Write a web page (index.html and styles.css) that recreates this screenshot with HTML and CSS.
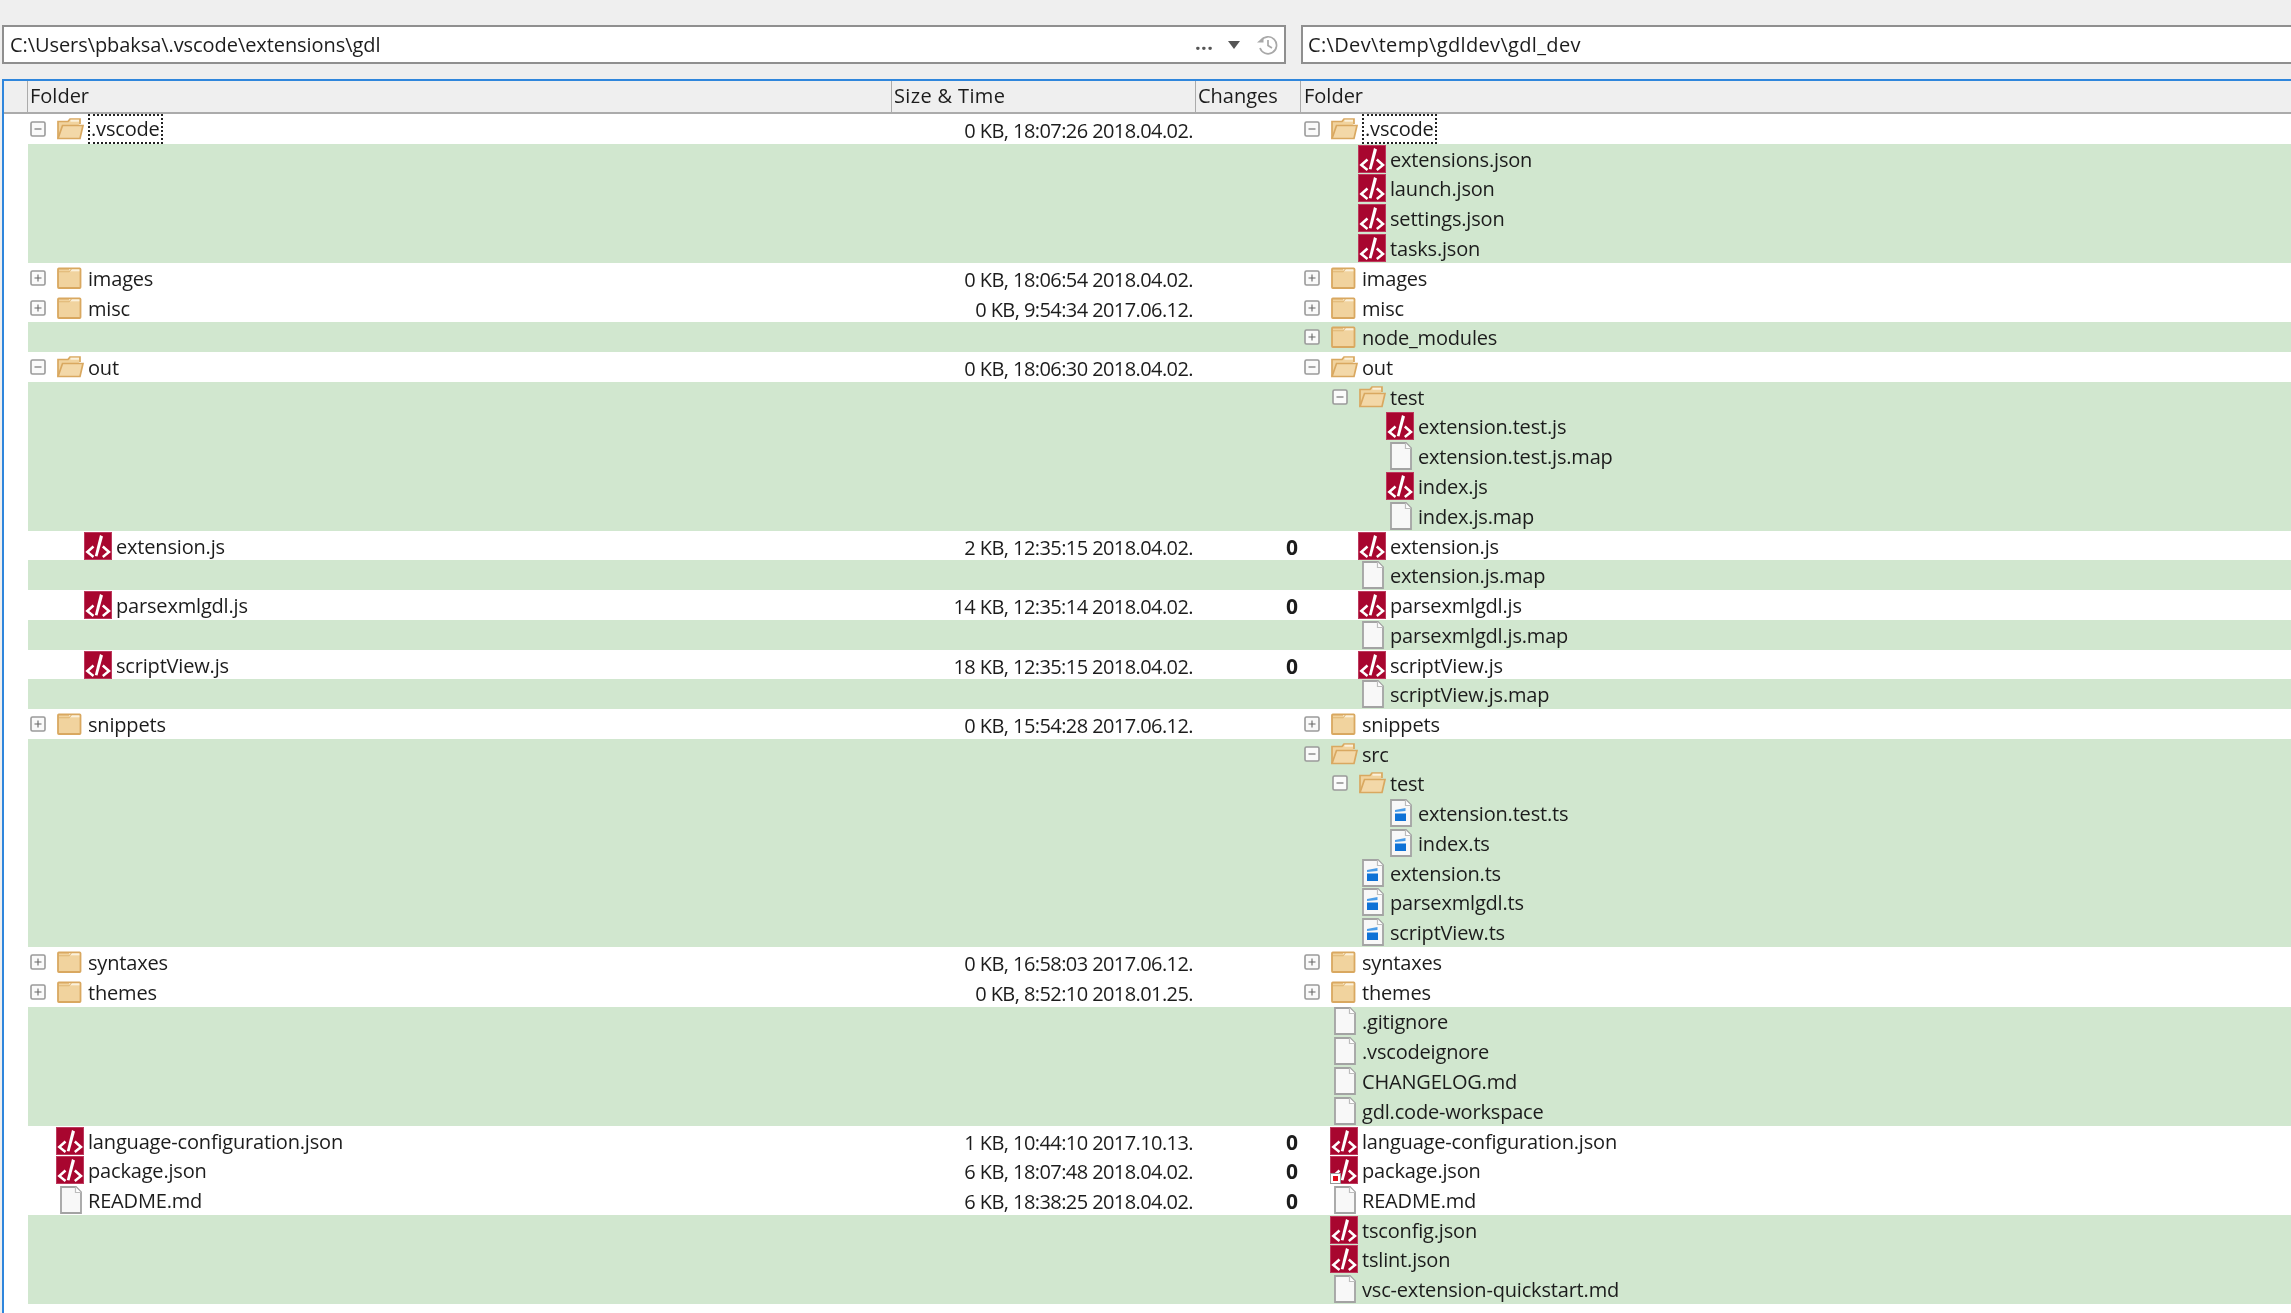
FILE: index.html
```html
<!DOCTYPE html>
<html lang="en">
<head>
<meta charset="utf-8">
<title>Folder compare</title>
<link rel="stylesheet" href="styles.css">
</head>
<body>
<svg class="defs" xmlns="http://www.w3.org/2000/svg">
  <symbol id="red" viewBox="0 0 28 28">
    <rect width="28" height="28" fill="#a8062f"/>
    <rect x=".5" y=".5" width="27" height="27" fill="none" stroke="#bd3a5e"/>
    <path d="M9.500 14.500 3.300 20l6.200 5M18.800 14.500 25 20l-6.200 5" fill="none" stroke="#fff" stroke-width="2.500"/>
    <path d="M16 3 19 4.500 13.500 24.500 10.800 24Z" fill="#fff"/>
  </symbol>
  <symbol id="blank" viewBox="0 0 28 28">
    <path d="M5 1H20L25 6V27H5Z" fill="#f8f8f8" stroke="#a3a3a3" stroke-width="1.800"/>
    <path d="M19.500 1V6.500H25" fill="#fff" stroke="#bdbdbd" stroke-width="1.200"/>
  </symbol>
  <symbol id="ts" viewBox="0 0 28 28">
    <path d="M5 1H20L25 6V27H5Z" fill="#f8f8f8" stroke="#a3a3a3" stroke-width="1.800"/>
    <path d="M19.500 1V6.500H25" fill="#fff" stroke="#bdbdbd" stroke-width="1.200"/>
    <path d="M9 11 19.500 9V12L9 13Z" fill="#4b9de8"/>
    <rect x="9" y="14.500" width="11" height="7.500" fill="#0e72d6"/>
  </symbol>
  <symbol id="closed" viewBox="0 0 25 22">
    <rect x="1" y="1.500" width="22.500" height="19.500" rx=".8" fill="#f1d39e" stroke="#d9a860" stroke-width="1.800"/>
    <path d="M12 3.300H22.400" stroke="#fbf1dc" stroke-width="2"/>
    <path d="M2 4.800H12L14.500 2" fill="none" stroke="#e0b674" stroke-width="1.100"/>
  </symbol>
  <symbol id="open" viewBox="0 0 27 22">
    <path d="M1 20.500V3.500H11L13 1H23V6" fill="#f1d39e" stroke="#d9a860" stroke-width="1.700"/>
    <path d="M13.500 2.700H22" stroke="#fbf1dc" stroke-width="2"/>
    <path d="M1 20.500 5.500 7.500H26L23 20.500Z" fill="#f3d8a8" stroke="#d9a860" stroke-width="1.700"/>
  </symbol>
  <symbol id="plus" viewBox="0 0 16 16">
    <rect x="1" y="1" width="14" height="14" rx="1.500" fill="#fafafa" stroke="#9a9a9a" stroke-width="1.600"/>
    <path d="M4.500 8h7M8 4.500v7" stroke="#666" stroke-width="1.100"/>
  </symbol>
  <symbol id="minus" viewBox="0 0 16 16">
    <rect x="1" y="1" width="14" height="14" rx="1.500" fill="#fafafa" stroke="#9a9a9a" stroke-width="1.600"/>
    <path d="M4.500 8h7" stroke="#666" stroke-width="1.100"/>
  </symbol>
  <symbol id="clock" viewBox="0 0 22 22">
    <path d="M5 6.500A8.500 8.500 0 1 1 4 14" fill="none" stroke="#a8a8a8" stroke-width="1.700"/>
    <path d="M1 8.500H7.500V3Z" fill="#a8a8a8"/>
    <path d="M12 6V11.500L16 14" fill="none" stroke="#a8a8a8" stroke-width="1.700"/>
  </symbol>
</svg>

<main class="app">
  <div class="paths">
    <div class="path path-left">
      <span class="path-text">C:\Users\pbaksa\.vscode\extensions\gdl</span>
      <span class="dots">...</span>
      <span class="caret"></span>
      <svg class="clock"><use href="#clock"/></svg>
    </div>
    <div class="path path-right">
      <span class="path-text">C:\Dev\temp\gdldev\gdl_dev</span>
    </div>
  </div>

  <section class="panel">
    <div class="head">
      <div class="head-gutter"></div>
      <div class="head-cell">Folder</div>
      <div class="head-cell">Size &amp; Time</div>
      <div class="head-cell">Changes</div>
      <div class="head-cell">Folder</div>
    </div>

    <div class="rows">
      <div class="row">
        <div class="tree"><span class="exp"><svg class="box"><use href="#minus"/></svg></span><svg class="folder-open"><use href="#open"/></svg><span class="name focus">.vscode</span></div>
        <div class="meta">0 KB, 18:07:26 2018.04.02.</div><div class="chg"></div>
        <div class="tree"><span class="exp"><svg class="box"><use href="#minus"/></svg></span><svg class="folder-open"><use href="#open"/></svg><span class="name focus">.vscode</span></div>
      </div>
      <div class="row diff"><div></div><div></div><div></div><div class="tree d1"><span class="exp"></span><svg class="ico"><use href="#red"/></svg><span class="name">extensions.json</span></div></div>
      <div class="row diff"><div></div><div></div><div></div><div class="tree d1"><span class="exp"></span><svg class="ico"><use href="#red"/></svg><span class="name">launch.json</span></div></div>
      <div class="row diff"><div></div><div></div><div></div><div class="tree d1"><span class="exp"></span><svg class="ico"><use href="#red"/></svg><span class="name">settings.json</span></div></div>
      <div class="row diff"><div></div><div></div><div></div><div class="tree d1"><span class="exp"></span><svg class="ico"><use href="#red"/></svg><span class="name">tasks.json</span></div></div>
      <div class="row">
        <div class="tree"><span class="exp"><svg class="box"><use href="#plus"/></svg></span><svg class="folder"><use href="#closed"/></svg><span class="name">images</span></div>
        <div class="meta">0 KB, 18:06:54 2018.04.02.</div><div class="chg"></div>
        <div class="tree"><span class="exp"><svg class="box"><use href="#plus"/></svg></span><svg class="folder"><use href="#closed"/></svg><span class="name">images</span></div>
      </div>
      <div class="row">
        <div class="tree"><span class="exp"><svg class="box"><use href="#plus"/></svg></span><svg class="folder"><use href="#closed"/></svg><span class="name">misc</span></div>
        <div class="meta">0 KB, 9:54:34 2017.06.12.</div><div class="chg"></div>
        <div class="tree"><span class="exp"><svg class="box"><use href="#plus"/></svg></span><svg class="folder"><use href="#closed"/></svg><span class="name">misc</span></div>
      </div>
      <div class="row diff"><div></div><div></div><div></div><div class="tree"><span class="exp"><svg class="box"><use href="#plus"/></svg></span><svg class="folder"><use href="#closed"/></svg><span class="name">node_modules</span></div></div>
      <div class="row">
        <div class="tree"><span class="exp"><svg class="box"><use href="#minus"/></svg></span><svg class="folder-open"><use href="#open"/></svg><span class="name">out</span></div>
        <div class="meta">0 KB, 18:06:30 2018.04.02.</div><div class="chg"></div>
        <div class="tree"><span class="exp"><svg class="box"><use href="#minus"/></svg></span><svg class="folder-open"><use href="#open"/></svg><span class="name">out</span></div>
      </div>
      <div class="row diff"><div></div><div></div><div></div><div class="tree d1"><span class="exp"><svg class="box"><use href="#minus"/></svg></span><svg class="folder-open"><use href="#open"/></svg><span class="name">test</span></div></div>
      <div class="row diff"><div></div><div></div><div></div><div class="tree d2"><span class="exp"></span><svg class="ico"><use href="#red"/></svg><span class="name">extension.test.js</span></div></div>
      <div class="row diff"><div></div><div></div><div></div><div class="tree d2"><span class="exp"></span><svg class="ico"><use href="#blank"/></svg><span class="name">extension.test.js.map</span></div></div>
      <div class="row diff"><div></div><div></div><div></div><div class="tree d2"><span class="exp"></span><svg class="ico"><use href="#red"/></svg><span class="name">index.js</span></div></div>
      <div class="row diff"><div></div><div></div><div></div><div class="tree d2"><span class="exp"></span><svg class="ico"><use href="#blank"/></svg><span class="name">index.js.map</span></div></div>
      <div class="row">
        <div class="tree d1"><span class="exp"></span><svg class="ico"><use href="#red"/></svg><span class="name">extension.js</span></div>
        <div class="meta">2 KB, 12:35:15 2018.04.02.</div><div class="chg">0</div>
        <div class="tree d1"><span class="exp"></span><svg class="ico"><use href="#red"/></svg><span class="name">extension.js</span></div>
      </div>
      <div class="row diff"><div></div><div></div><div></div><div class="tree d1"><span class="exp"></span><svg class="ico"><use href="#blank"/></svg><span class="name">extension.js.map</span></div></div>
      <div class="row">
        <div class="tree d1"><span class="exp"></span><svg class="ico"><use href="#red"/></svg><span class="name">parsexmlgdl.js</span></div>
        <div class="meta">14 KB, 12:35:14 2018.04.02.</div><div class="chg">0</div>
        <div class="tree d1"><span class="exp"></span><svg class="ico"><use href="#red"/></svg><span class="name">parsexmlgdl.js</span></div>
      </div>
      <div class="row diff"><div></div><div></div><div></div><div class="tree d1"><span class="exp"></span><svg class="ico"><use href="#blank"/></svg><span class="name">parsexmlgdl.js.map</span></div></div>
      <div class="row">
        <div class="tree d1"><span class="exp"></span><svg class="ico"><use href="#red"/></svg><span class="name">scriptView.js</span></div>
        <div class="meta">18 KB, 12:35:15 2018.04.02.</div><div class="chg">0</div>
        <div class="tree d1"><span class="exp"></span><svg class="ico"><use href="#red"/></svg><span class="name">scriptView.js</span></div>
      </div>
      <div class="row diff"><div></div><div></div><div></div><div class="tree d1"><span class="exp"></span><svg class="ico"><use href="#blank"/></svg><span class="name">scriptView.js.map</span></div></div>
      <div class="row">
        <div class="tree"><span class="exp"><svg class="box"><use href="#plus"/></svg></span><svg class="folder"><use href="#closed"/></svg><span class="name">snippets</span></div>
        <div class="meta">0 KB, 15:54:28 2017.06.12.</div><div class="chg"></div>
        <div class="tree"><span class="exp"><svg class="box"><use href="#plus"/></svg></span><svg class="folder"><use href="#closed"/></svg><span class="name">snippets</span></div>
      </div>
      <div class="row diff"><div></div><div></div><div></div><div class="tree"><span class="exp"><svg class="box"><use href="#minus"/></svg></span><svg class="folder-open"><use href="#open"/></svg><span class="name">src</span></div></div>
      <div class="row diff"><div></div><div></div><div></div><div class="tree d1"><span class="exp"><svg class="box"><use href="#minus"/></svg></span><svg class="folder-open"><use href="#open"/></svg><span class="name">test</span></div></div>
      <div class="row diff"><div></div><div></div><div></div><div class="tree d2"><span class="exp"></span><svg class="ico"><use href="#ts"/></svg><span class="name">extension.test.ts</span></div></div>
      <div class="row diff"><div></div><div></div><div></div><div class="tree d2"><span class="exp"></span><svg class="ico"><use href="#ts"/></svg><span class="name">index.ts</span></div></div>
      <div class="row diff"><div></div><div></div><div></div><div class="tree d1"><span class="exp"></span><svg class="ico"><use href="#ts"/></svg><span class="name">extension.ts</span></div></div>
      <div class="row diff"><div></div><div></div><div></div><div class="tree d1"><span class="exp"></span><svg class="ico"><use href="#ts"/></svg><span class="name">parsexmlgdl.ts</span></div></div>
      <div class="row diff"><div></div><div></div><div></div><div class="tree d1"><span class="exp"></span><svg class="ico"><use href="#ts"/></svg><span class="name">scriptView.ts</span></div></div>
      <div class="row">
        <div class="tree"><span class="exp"><svg class="box"><use href="#plus"/></svg></span><svg class="folder"><use href="#closed"/></svg><span class="name">syntaxes</span></div>
        <div class="meta">0 KB, 16:58:03 2017.06.12.</div><div class="chg"></div>
        <div class="tree"><span class="exp"><svg class="box"><use href="#plus"/></svg></span><svg class="folder"><use href="#closed"/></svg><span class="name">syntaxes</span></div>
      </div>
      <div class="row">
        <div class="tree"><span class="exp"><svg class="box"><use href="#plus"/></svg></span><svg class="folder"><use href="#closed"/></svg><span class="name">themes</span></div>
        <div class="meta">0 KB, 8:52:10 2018.01.25.</div><div class="chg"></div>
        <div class="tree"><span class="exp"><svg class="box"><use href="#plus"/></svg></span><svg class="folder"><use href="#closed"/></svg><span class="name">themes</span></div>
      </div>
      <div class="row diff"><div></div><div></div><div></div><div class="tree"><span class="exp"></span><svg class="ico"><use href="#blank"/></svg><span class="name">.gitignore</span></div></div>
      <div class="row diff"><div></div><div></div><div></div><div class="tree"><span class="exp"></span><svg class="ico"><use href="#blank"/></svg><span class="name">.vscodeignore</span></div></div>
      <div class="row diff"><div></div><div></div><div></div><div class="tree"><span class="exp"></span><svg class="ico"><use href="#blank"/></svg><span class="name">CHANGELOG.md</span></div></div>
      <div class="row diff"><div></div><div></div><div></div><div class="tree"><span class="exp"></span><svg class="ico"><use href="#blank"/></svg><span class="name">gdl.code-workspace</span></div></div>
      <div class="row">
        <div class="tree"><span class="exp"></span><svg class="ico"><use href="#red"/></svg><span class="name">language-configuration.json</span></div>
        <div class="meta">1 KB, 10:44:10 2017.10.13.</div><div class="chg">0</div>
        <div class="tree"><span class="exp"></span><svg class="ico"><use href="#red"/></svg><span class="name">language-configuration.json</span></div>
      </div>
      <div class="row">
        <div class="tree"><span class="exp"></span><svg class="ico"><use href="#red"/></svg><span class="name">package.json</span></div>
        <div class="meta">6 KB, 18:07:48 2018.04.02.</div><div class="chg">0</div>
        <div class="tree"><span class="exp"></span><span class="ico-wrap"><svg class="ico"><use href="#red"/></svg><span class="mark"></span></span><span class="name">package.json</span></div>
      </div>
      <div class="row">
        <div class="tree"><span class="exp"></span><svg class="ico"><use href="#blank"/></svg><span class="name">README.md</span></div>
        <div class="meta">6 KB, 18:38:25 2018.04.02.</div><div class="chg">0</div>
        <div class="tree"><span class="exp"></span><svg class="ico"><use href="#blank"/></svg><span class="name">README.md</span></div>
      </div>
      <div class="row diff"><div></div><div></div><div></div><div class="tree"><span class="exp"></span><svg class="ico"><use href="#red"/></svg><span class="name">tsconfig.json</span></div></div>
      <div class="row diff"><div></div><div></div><div></div><div class="tree"><span class="exp"></span><svg class="ico"><use href="#red"/></svg><span class="name">tslint.json</span></div></div>
      <div class="row diff"><div></div><div></div><div></div><div class="tree"><span class="exp"></span><svg class="ico"><use href="#blank"/></svg><span class="name">vsc-extension-quickstart.md</span></div></div>
    </div>
  </section>
</main>
</body>
</html>
```

FILE: styles.css
```css
* { box-sizing: border-box; }

html, body {
  margin: 0;
  height: 100%;
  overflow: hidden;
  background: #efefef;
}

.defs { display: none; }

.app {
  height: 1313px;
  font-family: "Open Sans", "Noto Sans", sans-serif;
  font-size: 20px;
  color: #1c1c1c;
  filter: blur(0.4px);
}

.paths {
  display: flex;
  gap: 15px;
  padding: 25px 0 15px 2px;
  height: 79px;
}

.path {
  height: 39px;
  background: #fff;
  border: 2px solid #8f8f8f;
  display: flex;
  align-items: center;
  padding-left: 6px;
  white-space: nowrap;
}

.path-left {
  width: 1284px;
  flex: none;
  letter-spacing: -0.07px;
}

.path-right {
  flex: 1;
  border-right: 0;
  padding-left: 5px;
  letter-spacing: 0.34px;
}

.path-text { flex: 1; }

.dots {
  font-weight: 700;
  color: #555;
  margin-top: -4px;
  width: 33px;
  letter-spacing: 0.4px;
}

.caret {
  width: 0;
  height: 0;
  border-left: 6px solid transparent;
  border-right: 6px solid transparent;
  border-top: 8px solid #555;
  margin-right: 16px;
}

.clock {
  width: 22px;
  height: 22px;
  margin-right: 6px;
}

.panel {
  margin-left: 2px;
  border-left: 2px solid #2f86dc;
  border-top: 2px solid #2f86dc;
  background: #fff;
  height: 1234px;
}

.head {
  display: grid;
  grid-template-columns: 24px 864px 304px 105px 1fr;
  height: 33px;
  background: #efefef;
  border-bottom: 2px solid #ababab;
}

.head-gutter { border-right: 1px solid #ababab; }

.head-cell {
  border-right: 1px solid #ababab;
  padding-left: 2px;
  line-height: 30px;
  white-space: nowrap;
}

.head-cell:nth-child(3) { letter-spacing: 0.35px; }

.head-cell:last-child { border-right: 0; padding-left: 3px; }

.row {
  margin-left: 24px;
  height: 29.75px;
  display: grid;
  grid-template-columns: 864px 304px 106px 1fr;
  align-items: center;
  white-space: nowrap;
}

.diff { background: #d1e7cf; }

.tree {
  display: flex;
  align-items: center;
  height: 100%;
}

.d1 { padding-left: 28px; }
.d2 { padding-left: 56px; }

.exp {
  flex: none;
  width: 28px;
  display: flex;
  align-items: center;
  padding-left: 2px;
}

.box { width: 16px; height: 16px; flex: none; }

.folder {
  flex: none;
  width: 25px;
  height: 22px;
  margin-left: 1px;
  margin-right: 6px;
}

.folder-open {
  flex: none;
  width: 27px;
  height: 22px;
  margin-left: 1px;
  margin-right: 4px;
}

.ico {
  flex: none;
  width: 28px;
  height: 28px;
  display: block;
}

.ico-wrap {
  position: relative;
  flex: none;
  width: 28px;
  height: 28px;
}

.mark {
  position: absolute;
  left: 0;
  bottom: 0;
  width: 11px;
  height: 11px;
  padding: 2px;
  background: #fff;
  border: 1px solid #999;
}

.mark::after {
  content: "";
  display: block;
  width: 5px;
  height: 5px;
  background: #e0101c;
}

.name {
  margin-left: 4px;
  padding-top: 1px;
  letter-spacing: -0.18px;
}

.folder + .name,
.folder-open + .name { margin-left: 0; }

.focus {
  outline: 2px dotted #222;
  outline-offset: -2px;
  padding: 0 3px;
  height: 30px;
  line-height: 30px;
  margin-left: -3px;
}

.meta {
  text-align: right;
  padding-right: 3px;
  padding-top: 3px;
  letter-spacing: -0.58px;
}

.chg {
  text-align: right;
  padding-right: 4px;
  font-weight: 700;
  font-size: 21px;
  padding-top: 2px;
}
```
